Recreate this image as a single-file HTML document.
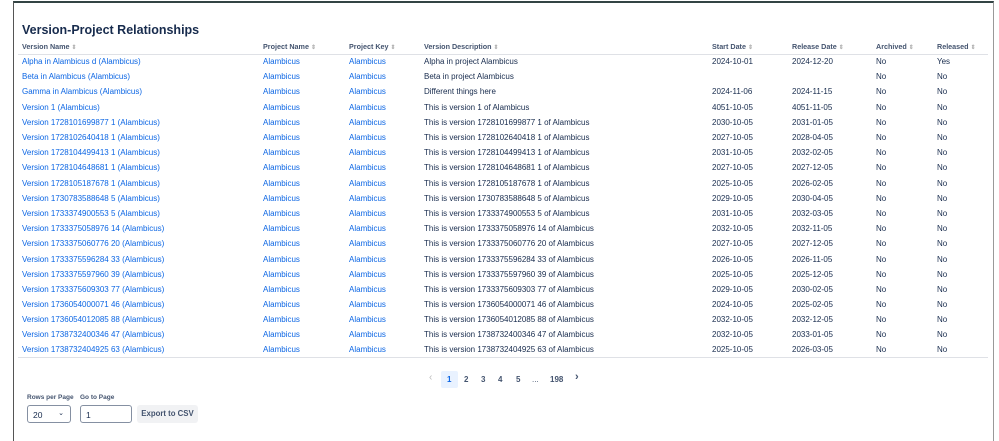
<!DOCTYPE html>
<html><head><meta charset="utf-8"><style>
*{margin:0;padding:0;box-sizing:border-box}
body{width:999px;height:434px;background:#fff;font-family:"Liberation Sans",sans-serif;font-size:8px;color:#172b4d;position:relative;overflow:hidden}
.frame{position:absolute;left:13px;top:1px;width:981px;height:440px;border-left:1.5px solid #555;border-top:2px solid #344;border-right:1px solid #999}
h1{position:absolute;left:22px;top:23px;font-size:12.5px;font-weight:600;color:#172b4d}
table{position:absolute;left:18px;top:40px;width:970px;border-collapse:collapse}
th{font-size:7.2px;font-weight:bold;text-align:left;color:#44546f;height:14px;padding:0 4px;border-bottom:1.5px solid #dfe1e6}
th span{color:#aaa;font-size:6px}
td{height:15.2px;padding:0 4px;white-space:nowrap}
tr:last-child td{border-bottom:1px solid #dfe1e6}
a{color:#0c66e4;text-decoration:none}
.pg{position:absolute;top:375px;font-size:8px;font-weight:bold;color:#44546f}
.lbl{position:absolute;top:394px;font-size:6.5px;font-weight:bold;color:#44546f}
.box{position:absolute;top:405px;height:18px;border:1px solid #8590a2;border-radius:3px;font-size:8.5px;padding:4px 5px}
</style></head><body>
<div class="frame"></div>
<h1>Version-Project Relationships</h1>
<table>
<tr><th style="width:241px">Version Name <span>⇕</span></th><th style="width:86px">Project Name <span>⇕</span></th><th style="width:75px">Project Key <span>⇕</span></th><th style="width:288px">Version Description <span>⇕</span></th><th style="width:80px">Start Date <span>⇕</span></th><th style="width:84px">Release Date <span>⇕</span></th><th style="width:61px">Archived <span>⇕</span></th><th>Released <span>⇕</span></th></tr>
<tr><td><a>Alpha in Alambicus d (Alambicus)</a></td><td><a>Alambicus</a></td><td><a>Alambicus</a></td><td>Alpha in project Alambicus</td><td>2024-10-01</td><td>2024-12-20</td><td>No</td><td>Yes</td></tr>
<tr><td><a>Beta in Alambicus (Alambicus)</a></td><td><a>Alambicus</a></td><td><a>Alambicus</a></td><td>Beta in project Alambicus</td><td></td><td></td><td>No</td><td>No</td></tr>
<tr><td><a>Gamma in Alambicus (Alambicus)</a></td><td><a>Alambicus</a></td><td><a>Alambicus</a></td><td>Different things here</td><td>2024-11-06</td><td>2024-11-15</td><td>No</td><td>No</td></tr>
<tr><td><a>Version 1 (Alambicus)</a></td><td><a>Alambicus</a></td><td><a>Alambicus</a></td><td>This is version 1 of Alambicus</td><td>4051-10-05</td><td>4051-11-05</td><td>No</td><td>No</td></tr>
<tr><td><a>Version 1728101699877 1 (Alambicus)</a></td><td><a>Alambicus</a></td><td><a>Alambicus</a></td><td>This is version 1728101699877 1 of Alambicus</td><td>2030-10-05</td><td>2031-01-05</td><td>No</td><td>No</td></tr>
<tr><td><a>Version 1728102640418 1 (Alambicus)</a></td><td><a>Alambicus</a></td><td><a>Alambicus</a></td><td>This is version 1728102640418 1 of Alambicus</td><td>2027-10-05</td><td>2028-04-05</td><td>No</td><td>No</td></tr>
<tr><td><a>Version 1728104499413 1 (Alambicus)</a></td><td><a>Alambicus</a></td><td><a>Alambicus</a></td><td>This is version 1728104499413 1 of Alambicus</td><td>2031-10-05</td><td>2032-02-05</td><td>No</td><td>No</td></tr>
<tr><td><a>Version 1728104648681 1 (Alambicus)</a></td><td><a>Alambicus</a></td><td><a>Alambicus</a></td><td>This is version 1728104648681 1 of Alambicus</td><td>2027-10-05</td><td>2027-12-05</td><td>No</td><td>No</td></tr>
<tr><td><a>Version 1728105187678 1 (Alambicus)</a></td><td><a>Alambicus</a></td><td><a>Alambicus</a></td><td>This is version 1728105187678 1 of Alambicus</td><td>2025-10-05</td><td>2026-02-05</td><td>No</td><td>No</td></tr>
<tr><td><a>Version 1730783588648 5 (Alambicus)</a></td><td><a>Alambicus</a></td><td><a>Alambicus</a></td><td>This is version 1730783588648 5 of Alambicus</td><td>2029-10-05</td><td>2030-04-05</td><td>No</td><td>No</td></tr>
<tr><td><a>Version 1733374900553 5 (Alambicus)</a></td><td><a>Alambicus</a></td><td><a>Alambicus</a></td><td>This is version 1733374900553 5 of Alambicus</td><td>2031-10-05</td><td>2032-03-05</td><td>No</td><td>No</td></tr>
<tr><td><a>Version 1733375058976 14 (Alambicus)</a></td><td><a>Alambicus</a></td><td><a>Alambicus</a></td><td>This is version 1733375058976 14 of Alambicus</td><td>2032-10-05</td><td>2032-11-05</td><td>No</td><td>No</td></tr>
<tr><td><a>Version 1733375060776 20 (Alambicus)</a></td><td><a>Alambicus</a></td><td><a>Alambicus</a></td><td>This is version 1733375060776 20 of Alambicus</td><td>2027-10-05</td><td>2027-12-05</td><td>No</td><td>No</td></tr>
<tr><td><a>Version 1733375596284 33 (Alambicus)</a></td><td><a>Alambicus</a></td><td><a>Alambicus</a></td><td>This is version 1733375596284 33 of Alambicus</td><td>2026-10-05</td><td>2026-11-05</td><td>No</td><td>No</td></tr>
<tr><td><a>Version 1733375597960 39 (Alambicus)</a></td><td><a>Alambicus</a></td><td><a>Alambicus</a></td><td>This is version 1733375597960 39 of Alambicus</td><td>2025-10-05</td><td>2025-12-05</td><td>No</td><td>No</td></tr>
<tr><td><a>Version 1733375609303 77 (Alambicus)</a></td><td><a>Alambicus</a></td><td><a>Alambicus</a></td><td>This is version 1733375609303 77 of Alambicus</td><td>2029-10-05</td><td>2030-02-05</td><td>No</td><td>No</td></tr>
<tr><td><a>Version 1736054000071 46 (Alambicus)</a></td><td><a>Alambicus</a></td><td><a>Alambicus</a></td><td>This is version 1736054000071 46 of Alambicus</td><td>2024-10-05</td><td>2025-02-05</td><td>No</td><td>No</td></tr>
<tr><td><a>Version 1736054012085 88 (Alambicus)</a></td><td><a>Alambicus</a></td><td><a>Alambicus</a></td><td>This is version 1736054012085 88 of Alambicus</td><td>2032-10-05</td><td>2032-12-05</td><td>No</td><td>No</td></tr>
<tr><td><a>Version 1738732400346 47 (Alambicus)</a></td><td><a>Alambicus</a></td><td><a>Alambicus</a></td><td>This is version 1738732400346 47 of Alambicus</td><td>2032-10-05</td><td>2033-01-05</td><td>No</td><td>No</td></tr>
<tr><td><a>Version 1738732404925 63 (Alambicus)</a></td><td><a>Alambicus</a></td><td><a>Alambicus</a></td><td>This is version 1738732404925 63 of Alambicus</td><td>2025-10-05</td><td>2026-03-05</td><td>No</td><td>No</td></tr>
</table>
<div style="position:absolute;left:441px;top:371px;width:17px;height:17px;background:#e9f2ff;border-radius:2px"></div>
<span class="pg" style="left:429px;color:#bbb;font-weight:normal;font-size:10px;top:372px">‹</span>
<span class="pg" style="left:447px;color:#0c66e4">1</span>
<span class="pg" style="left:464px">2</span>
<span class="pg" style="left:481px">3</span>
<span class="pg" style="left:498px">4</span>
<span class="pg" style="left:516px">5</span>
<span class="pg" style="left:532px;font-weight:normal">...</span>
<span class="pg" style="left:550px">198</span>
<span class="pg" style="left:575px;font-size:11px;top:371px">›</span>
<span class="lbl" style="left:27px">Rows per Page</span>
<span class="lbl" style="left:80px">Go to Page</span>
<div class="box" style="left:27px;width:44px">20 <span style="position:absolute;right:6px;top:3px;font-size:7px">⌄</span></div>
<div class="box" style="left:80px;width:52px">1</div>
<div style="position:absolute;left:137px;top:405px;width:61px;height:18px;background:#f1f2f4;border-radius:3px;font-size:7.8px;font-weight:bold;color:#44546f;text-align:center;line-height:18px">Export to CSV</div>
</body></html>
